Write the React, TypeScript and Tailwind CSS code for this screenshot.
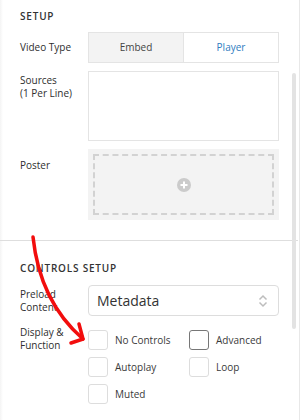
import React from "react"

const font = { fontFamily: '"Open Sans", "Liberation Sans", sans-serif' }

function Heading({ children }: { children: React.ReactNode }) {
  return (
    <h3 className="text-[10px] font-semibold tracking-[0.08em] text-[#333] leading-none">
      {children}
    </h3>
  )
}

function Checkbox({ label, active }: { label: string; active?: boolean }) {
  return (
    <label className="flex items-center gap-[7px] h-5">
      <span
        className={`w-5 h-5 rounded-[3px] border bg-white shrink-0 ${
          active ? "border-[#777]" : "border-[#ddd]"
        }`}
      />
      <span className="text-[10px] text-[#3a3a3a]">{label}</span>
    </label>
  )
}

export default function App() {
  return (
    <div className="relative w-[301px] h-[420px] bg-white overflow-hidden" style={font}>
      <div className="w-[300px] h-full border-r border-[#e8e8e8] bg-gradient-to-r from-[#f4f4f4] via-white via-[3px] to-white">
        <section className="pl-5 pr-5 pt-[11px] pb-5">
          <Heading>SETUP</Heading>

          <div className="mt-[11px] flex items-center">
            <span className="w-[68px] text-[10px] text-[#2e2e2e]">Video Type</span>
            <div className="flex-1 h-[31px] flex border border-[#e4e4e4] text-[10px]">
              <button className="flex-1 bg-[#f3f3f3] border-r border-[#e4e4e4] text-[#444]">Embed</button>
              <button className="flex-1 bg-white text-[#2f7cbf]">Player</button>
            </div>
          </div>

          <div className="mt-2 flex">
            <span className="w-[68px] pt-[3px] text-[10px] leading-[13px] text-[#2e2e2e]">
              Sources
              <br />
              (1 Per Line)
            </span>
            <div className="flex-1 h-[70px] border border-[#e4e4e4] bg-white" />
          </div>

          <div className="mt-2 flex">
            <span className="w-[68px] pt-[10px] text-[10px] leading-[13px] text-[#2e2e2e]">Poster</span>
            <div className="flex-1 h-[71px] bg-[#f3f3f3] p-[5px]">
              <div className="h-full border-2 border-dashed border-[#d2d2d2] flex items-center justify-center">
                <svg width="14" height="14" viewBox="0 0 14 14">
                  <circle cx="7" cy="7" r="7" fill="#cbcbcb" />
                  <path d="M7 3.5v7M3.5 7h7" stroke="#fff" strokeWidth="2" />
                </svg>
              </div>
            </div>
          </div>
        </section>

        <div className="border-t border-[#dedede] mr-[1px]" />

        <section className="pl-5 pr-5 pt-[22px]">
          <Heading>CONTROLS SETUP</Heading>

          <div className="mt-[12px] flex">
            <span className="w-[68px] pt-[3px] text-[10px] leading-[13px] text-[#2e2e2e]">
              Preload
              <br />
              Content
            </span>
            <div className="flex-1 h-[31px] border border-[#ddd] rounded-[4px] flex items-center justify-between pl-2 pr-[10px]">
              <span className="text-[14px] text-[#333]">Metadata</span>
              <svg width="10" height="14" viewBox="0 0 10 14" fill="none" stroke="#bdbdbd" strokeWidth="1.5">
                <path d="M1.5 5.5 5 2l3.5 3.5M1.5 8.5 5 12l3.5-3.5" />
              </svg>
            </div>
          </div>

          <div className="mt-[14px] flex">
            <span className="w-[68px] -mt-[4px] text-[10px] leading-[13px] text-[#2e2e2e]">
              Display &amp;
              <br />
              Function
            </span>
            <div className="flex-1 grid grid-cols-[101px_1fr] gap-y-[7px]">
              <Checkbox label="No Controls" />
              <Checkbox label="Advanced" active />
              <Checkbox label="Autoplay" />
              <Checkbox label="Loop" />
              <Checkbox label="Muted" />
            </div>
          </div>
        </section>
      </div>

      <div className="absolute left-[292px] top-[73px] w-[4px] h-[256px] rounded-full bg-[#e3e3e3]" />

      <svg
        className="absolute left-0 top-0 pointer-events-none"
        width="301"
        height="420"
        fill="none"
        stroke="#f20d0d"
        strokeWidth="3.5"
        strokeLinecap="round"
        strokeLinejoin="round"
      >
        <path d="M33 237C37 275 52 312 83 339" />
        <path d="M79 324 83 339 71 343" />
      </svg>
    </div>
  )
}
